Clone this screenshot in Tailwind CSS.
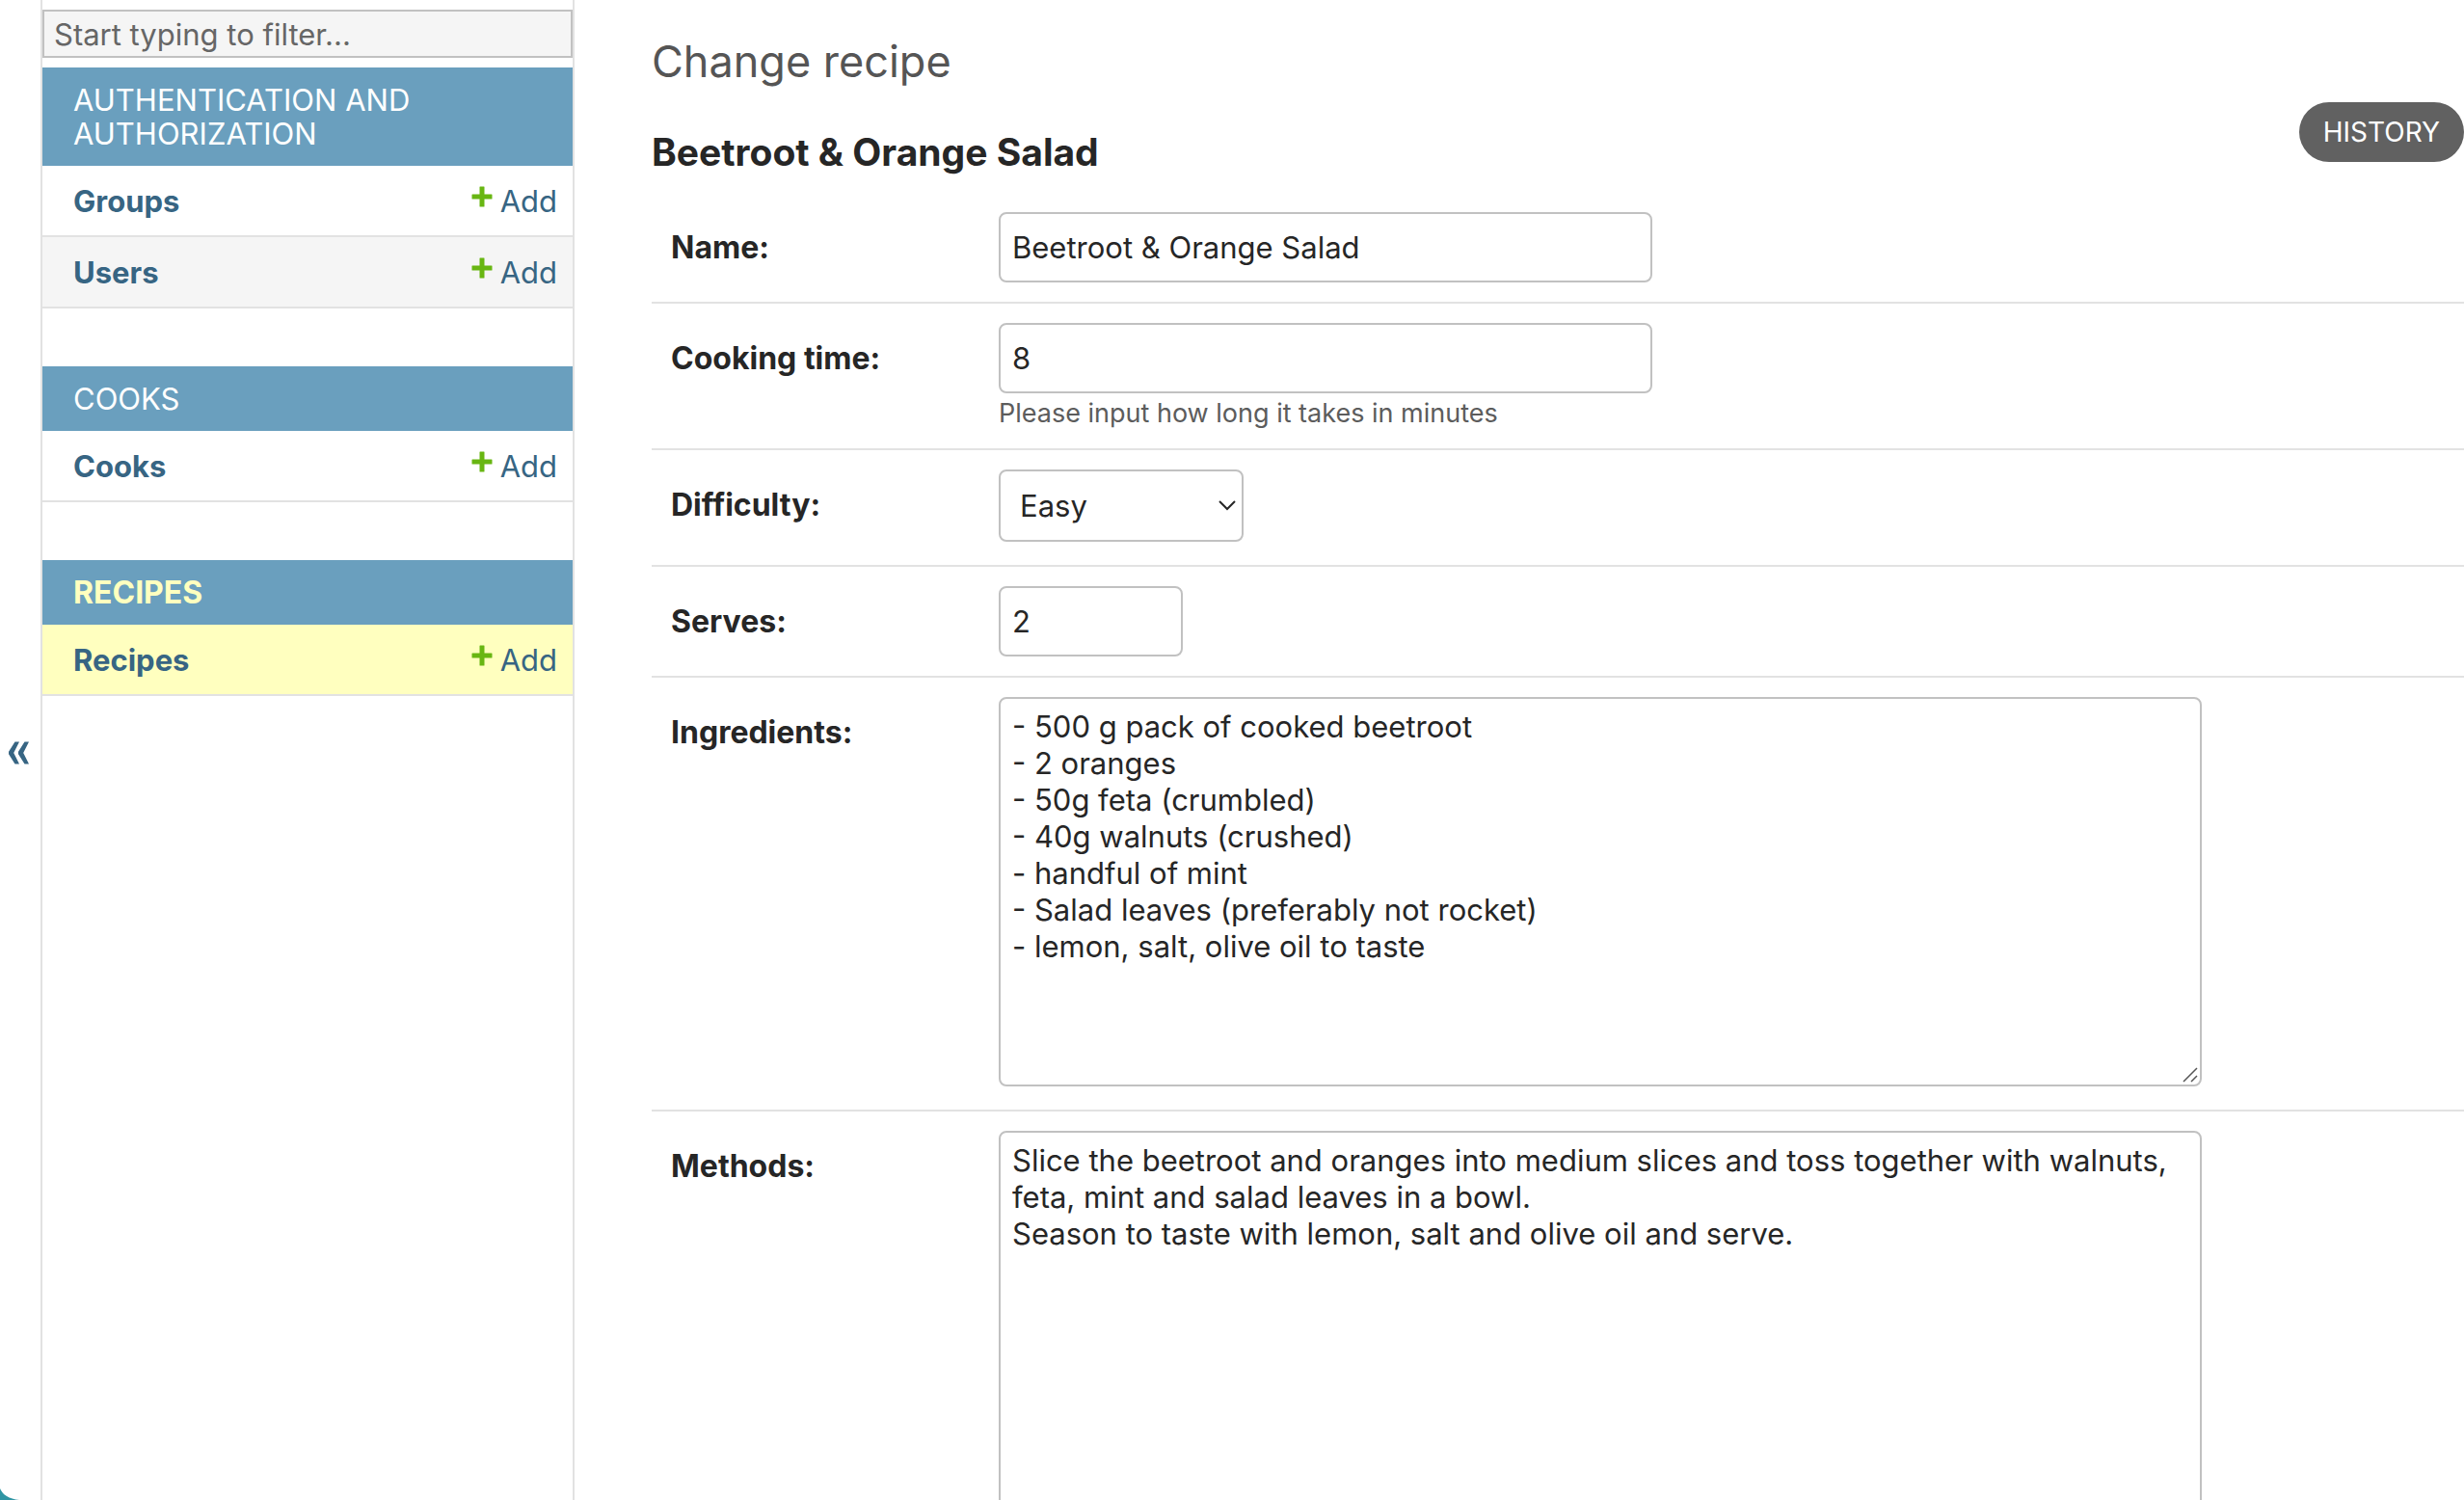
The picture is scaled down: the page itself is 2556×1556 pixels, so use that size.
<!DOCTYPE html>
<html lang="en">
<head>
<meta charset="utf-8">
<meta name="viewport" content="width=device-width, initial-scale=1">
<title>Change recipe</title>
<script src="https://cdn.jsdelivr.net/npm/@tailwindcss/browser@4"></script>
</head>
<body class="relative flex h-screen overflow-hidden bg-white font-[Inter,sans-serif] text-[31px] text-[#262626]">

<svg class="hidden" aria-hidden="true">
  <symbol id="plus" viewBox="0 0 22 22"><path fill="#68b612" d="M9 .5h4q.5 0 .5.5v7.500h7.500q.5 0 .5.5v4q0 .5-.5.5h-7.500v7.500q0 .5-.5.5h-4q-.5 0-.5-.5v-7.500H1q-.5 0-.5-.5v-4q0-.5.5-.5h7.500V1q0-.5.5-.5z"/></symbol>
  <symbol id="grip" viewBox="0 0 16 16"><path fill="none" stroke="#555" stroke-width="1.500" d="M1 15 15 1M9 15l6-6"/></symbol>
</svg>

<button type="button" aria-label="Toggle navigation" class="flex w-[42px] shrink-0 items-center justify-center pt-1.5 pr-0.5">
  <svg class="h-6 w-6" viewBox="0 0 24 24" fill="#376583"><path d="M7.500.5H12L6.200 12 12 23.500H7.500L1 13.200v-2.400zM17.500.5H22L16.200 12 22 23.500h-4.500L11 13.200v-2.400z"/></svg>
</button>

<nav aria-label="Sidebar" class="flex w-[554px] shrink-0 flex-col border-x-2 border-[#e2e2e2] pt-[10px]">
  <input type="search" aria-label="Filter navigation items" placeholder="Start typing to filter..." class="mb-[10px] h-[50px] w-full border-2 border-[#c1c1c1] bg-[#f5f5f5] px-[10px] placeholder:text-[#666]">

  <section class="mb-[60px]">
    <h2 class="bg-[#6a9fbe] px-8 py-4 leading-[35px] text-white"><a href="#">AUTHENTICATION AND AUTHORIZATION</a></h2>
    <div class="flex h-[74px] items-center justify-between border-b-2 border-[#e2e2e2] pt-0.5 pr-4 pl-8 text-[#376583]">
      <a href="#" class="font-bold">Groups</a>
      <a href="#" class="flex items-center gap-2"><svg class="mb-2.5 h-[22px] w-[22px]"><use href="#plus"/></svg>Add</a>
    </div>
    <div class="flex h-[74px] items-center justify-between border-b-2 border-[#e2e2e2] bg-[#f5f5f5] pt-0.5 pr-4 pl-8 text-[#376583]">
      <a href="#" class="font-bold">Users</a>
      <a href="#" class="flex items-center gap-2"><svg class="mb-2.5 h-[22px] w-[22px]"><use href="#plus"/></svg>Add</a>
    </div>
  </section>

  <section class="mb-[60px]">
    <h2 class="bg-[#6a9fbe] px-8 py-4 leading-[35px] text-white"><a href="#">COOKS</a></h2>
    <div class="flex h-[74px] items-center justify-between border-b-2 border-[#e2e2e2] pt-0.5 pr-4 pl-8 text-[#376583]">
      <a href="#" class="font-bold">Cooks</a>
      <a href="#" class="flex items-center gap-2"><svg class="mb-2.5 h-[22px] w-[22px]"><use href="#plus"/></svg>Add</a>
    </div>
  </section>

  <section>
    <h2 class="bg-[#6a9fbe] px-8 py-4 text-[32px] leading-[35px] font-bold text-[#ffffbf]"><a href="#">RECIPES</a></h2>
    <div class="flex h-[74px] items-center justify-between border-b-2 border-[#e2e2e2] bg-[#ffffbf] pt-0.5 pr-4 pl-8 text-[#376583]">
      <a href="#" class="font-bold">Recipes</a>
      <a href="#" class="flex items-center gap-2"><svg class="mb-2.5 h-[22px] w-[22px]"><use href="#plus"/></svg>Add</a>
    </div>
  </section>
</nav>

<main class="min-w-0 flex-1 overflow-hidden pt-9 pl-20">
  <h1 class="mb-[14px] text-[45px] leading-[56px] font-normal text-[#555]">Change recipe</h1>
  <div class="mb-[18px] flex items-start justify-between">
    <h2 class="pt-7 text-[39px] leading-[48px] font-bold">Beetroot &amp; Orange Salad</h2>
    <a href="#" class="flex h-[62px] items-center rounded-full bg-[#616161] px-[25px] text-[28px] text-white">HISTORY</a>
  </div>

  <form>
    <div class="flex border-b-2 border-[#e2e2e2] py-5 pl-5">
      <label for="name" class="w-[340px] shrink-0 text-[32px] leading-[73px] font-bold">Name:</label>
      <input id="name" type="text" value="Beetroot &amp; Orange Salad" class="h-[73px] w-[678px] rounded-lg border-2 border-[#c1c1c1] px-3">
    </div>

    <div class="flex border-b-2 border-[#e2e2e2] py-5 pl-5">
      <label for="time" class="w-[340px] shrink-0 text-[32px] leading-[73px] font-bold">Cooking time:</label>
      <div>
        <input id="time" type="text" value="8" aria-describedby="time-help" class="block h-[73px] w-[678px] rounded-lg border-2 border-[#c1c1c1] px-3">
        <p id="time-help" class="mt-[5px] text-[27px] leading-8 text-[#5c5c5c]">Please input how long it takes in minutes</p>
      </div>
    </div>

    <div class="flex border-b-2 border-[#e2e2e2] pt-5 pb-6 pl-5">
      <label for="difficulty" class="w-[340px] shrink-0 text-[32px] leading-[73px] font-bold">Difficulty:</label>
      <div class="relative">
        <select id="difficulty" class="block h-[75px] w-[254px] appearance-none rounded-lg border-2 border-[#c1c1c1] bg-white px-5 pt-0.5">
          <option>Easy</option>
          <option>Medium</option>
          <option>Hard</option>
        </select>
        <svg class="pointer-events-none absolute top-8 right-2 h-[11px] w-[18px]" viewBox="0 0 18 11" fill="none" stroke="#262626" stroke-width="2"><path d="M1 1l8 8 8-8"/></svg>
      </div>
    </div>

    <div class="flex border-b-2 border-[#e2e2e2] py-5 pl-5">
      <label for="serves" class="w-[340px] shrink-0 text-[32px] leading-[73px] font-bold">Serves:</label>
      <input id="serves" type="text" inputmode="numeric" value="2" class="h-[73px] w-[191px] rounded-lg border-2 border-[#c1c1c1] px-3">
    </div>

    <div class="flex border-b-2 border-[#e2e2e2] pt-5 pb-6 pl-5">
      <label for="ingredients" class="w-[340px] shrink-0 text-[32px] leading-[73px] font-bold">Ingredients:</label>
      <div class="relative w-full max-w-[1248px]">
        <textarea id="ingredients" class="block h-[404px] w-full resize-none rounded-lg border-2 border-[#c1c1c1] px-3 py-[10px] leading-[38px]">- 500 g pack of cooked beetroot
- 2 oranges
- 50g feta (crumbled)
- 40g walnuts (crushed)
- handful of mint
- Salad leaves (preferably not rocket)
- lemon, salt, olive oil to taste</textarea>
        <svg class="pointer-events-none absolute right-1 bottom-1 h-4 w-4"><use href="#grip"/></svg>
      </div>
    </div>

    <div class="flex border-b-2 border-[#e2e2e2] pt-5 pb-6 pl-5">
      <label for="methods" class="w-[340px] shrink-0 text-[32px] leading-[73px] font-bold">Methods:</label>
      <div class="relative w-full max-w-[1248px]">
        <textarea id="methods" class="block h-[404px] w-full resize-none rounded-lg border-2 border-[#c1c1c1] px-3 py-[10px] leading-[38px]">Slice the beetroot and oranges into medium slices and toss together with walnuts, feta, mint and salad leaves in a bowl.
Season to taste with lemon, salt and olive oil and serve.</textarea>
        <svg class="pointer-events-none absolute right-1 bottom-1 h-4 w-4"><use href="#grip"/></svg>
      </div>
    </div>
  </form>
</main>

<!-- Desktop showing behind the window's rounded corner -->
<svg class="pointer-events-none absolute bottom-0 left-0 h-3 w-5" viewBox="0 0 20 12" fill="#2f95a3" aria-hidden="true"><path d="M0 0q4 10 20 12H0z"/></svg>
</body>
</html>
